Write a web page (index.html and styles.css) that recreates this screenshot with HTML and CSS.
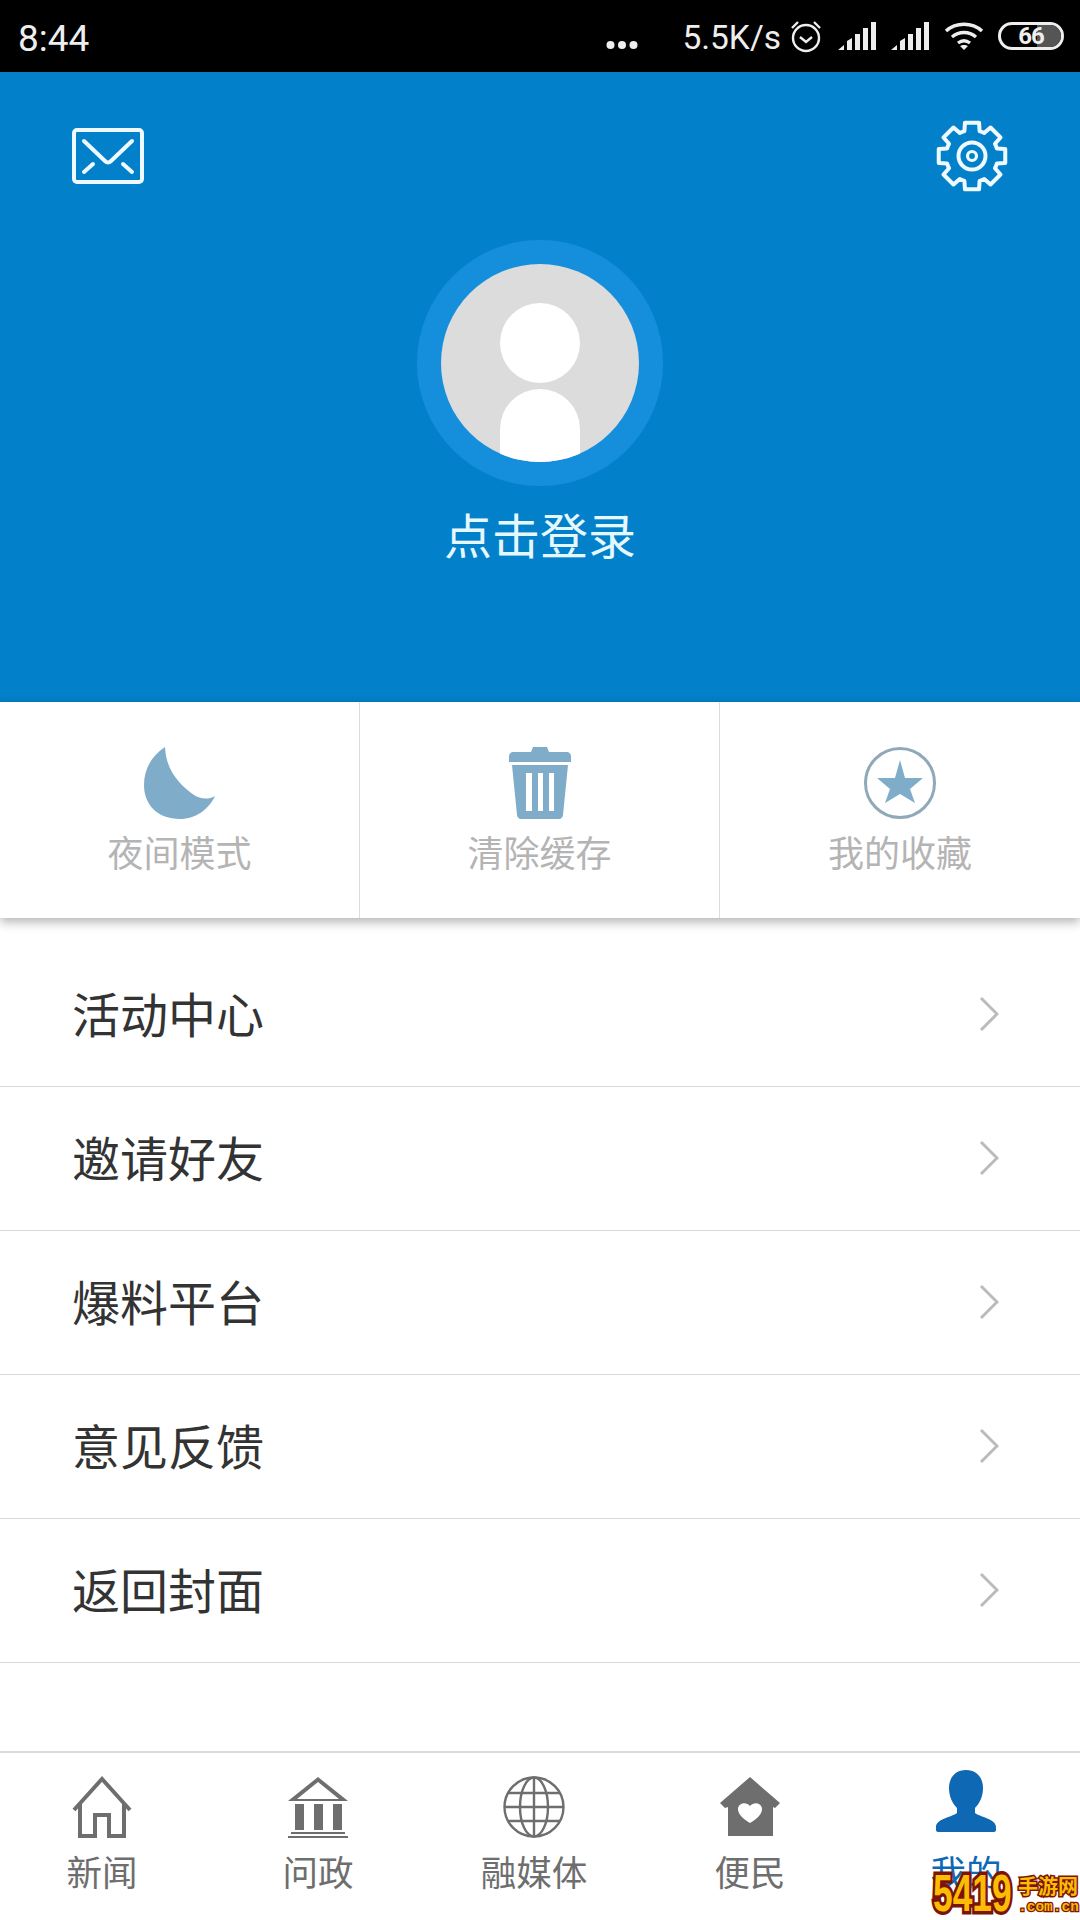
FILE: index.html
```html
<!DOCTYPE html>
<html lang="zh-CN">
<head>
    <meta charset="UTF-8" />
    <meta name="viewport" content="width=device-width, initial-scale=1" />
    <title>我的</title>
    <link rel="stylesheet" href="styles.css">
</head>
<body>

<div class="statusbar">
    <span class="clock">8:44</span>
    <div class="status-right">
        <svg class="dots" width="32" height="10" viewBox="0 0 32 10"><circle cx="4.500" cy="5" r="4"/><circle cx="16" cy="5" r="4"/><circle cx="27.500" cy="5" r="4"/></svg>
        <span class="speed">5.5K/s</span>
        <svg class="alarm" width="32" height="34" viewBox="0 0 32 34" fill="none" stroke="#eee" stroke-width="2.400"><circle cx="16" cy="19" r="13"/><path d="M10 18l6 5 6-5M2 9l6-6M30 9l-6-6"/></svg>
        <svg class="signal" width="38" height="28" viewBox="0 0 38 28" fill="#eee"><path d="M0 28l6-5v5zM9 19l5-3v12H9zM17 12h5v16h-5zM25 6h5v22h-5zM33 0h5v28h-5z"/></svg>
        <svg class="signal" width="38" height="28" viewBox="0 0 38 28" fill="#eee"><path d="M0 28l6-5v5zM9 19l5-3v12H9zM17 12h5v16h-5zM25 6h5v22h-5zM33 0h5v28h-5z"/></svg>
        <svg class="wifi" width="40" height="28" viewBox="0 0 40 28" fill="none" stroke="#eee" stroke-width="3.400"><path d="M2 9c10-9 26-9 36 0M8 15c7-6 17-6 24 0M14 21c4-3 8-3 12 0"/><path d="M20 28l-4-4c2-1.500 6-1.500 8 0z" fill="#eee" stroke="none"/></svg>
        <div class="battery"><div class="battery-fill"></div><span>66</span></div>
    </div>
</div>

<header class="profile">
    <div class="profile-top">
        <svg width="72" height="56" viewBox="0 0 72 56" fill="none" stroke="#eefaff" stroke-width="4" stroke-linecap="round" stroke-linejoin="round"><rect x="2" y="2" width="68" height="52" rx="3"/><path d="M12 13l21 20c2 2 4 2 6 0l21-20M12 44l9-8M60 44l-9-8"/></svg>
        <svg width="72" height="72" viewBox="0 0 72 72" fill="none" stroke="#eefaff" stroke-width="4" stroke-linejoin="round"><path d="M28.400 11.140L28.930 2.740H43.070L43.600 11.140A26 26 0 0 1 48.210 13.040L54.520 7.480L64.520 17.480L58.960 23.790A26 26 0 0 1 60.860 28.400L69.260 28.930V43.070L60.860 43.600A26 26 0 0 1 58.960 48.210L64.520 54.520L54.520 64.520L48.210 58.960A26 26 0 0 1 43.600 60.860L43.070 69.260H28.930L28.400 60.860A26 26 0 0 1 23.790 58.960L17.480 64.520L7.480 54.520L13.040 48.210A26 26 0 0 1 11.140 43.600L2.740 43.070V28.930L11.140 28.400A26 26 0 0 1 13.040 23.790L7.480 17.480L17.480 7.480L23.790 13.040A26 26 0 0 1 28.400 11.140Z"/><circle cx="36" cy="36" r="13.500"/><circle cx="36" cy="36" r="4.500" stroke-width="3.200"/></svg>
    </div>
    <div class="avatar-ring">
        <div class="avatar">
            <div class="avatar-head"></div>
            <div class="avatar-body"></div>
        </div>
    </div>
    <div class="login">点击登录</div>
</header>

<div class="shortcuts">
    <div class="shortcut">
        <svg width="72" height="72" viewBox="0 0 72 72" fill="#7fadc9"><path d="M21 0C6 10 0 24 0 38C0 58 14 72 36 72C52 72 65 62 71 49C64 53 56 52 50 48C36 38 22 24 21 0Z"/></svg>
        <span>夜间模式</span>
    </div>
    <div class="shortcut">
        <svg width="62" height="72" viewBox="0 0 62 72" fill="#7fadc9"><path d="M24 0h14l2 5h18c2 0 4 2 4 4v6H0V9c0-2 2-4 4-4h18z"/><path fill-rule="evenodd" d="M3 18h56l-5 50c0 2-2 4-4 4H12c-2 0-4-2-4-4zM17 26v38h6V26zM29 26v38h5V26zM40 26v38h5V26z"/></svg>
        <span>清除缓存</span>
    </div>
    <div class="shortcut">
        <svg width="72" height="72" viewBox="0 0 72 72"><circle cx="36" cy="36" r="34.500" fill="none" stroke="#8fa9b8" stroke-width="3"/><path fill="#7fadc9" d="M36 13l5 18h18L46 42l5 14-15-9-15 9 5-14-13-11h18z"/></svg>
        <span>我的收藏</span>
    </div>
</div>

<ul class="menu">
    <li><span>活动中心</span><svg width="20" height="36" viewBox="0 0 20 36" fill="none" stroke="#bbb" stroke-width="3"><path d="M2 2l16 16L2 34"/></svg></li>
    <li><span>邀请好友</span><svg width="20" height="36" viewBox="0 0 20 36" fill="none" stroke="#bbb" stroke-width="3"><path d="M2 2l16 16L2 34"/></svg></li>
    <li><span>爆料平台</span><svg width="20" height="36" viewBox="0 0 20 36" fill="none" stroke="#bbb" stroke-width="3"><path d="M2 2l16 16L2 34"/></svg></li>
    <li><span>意见反馈</span><svg width="20" height="36" viewBox="0 0 20 36" fill="none" stroke="#bbb" stroke-width="3"><path d="M2 2l16 16L2 34"/></svg></li>
    <li><span>返回封面</span><svg width="20" height="36" viewBox="0 0 20 36" fill="none" stroke="#bbb" stroke-width="3"><path d="M2 2l16 16L2 34"/></svg></li>
</ul>

<nav class="tabbar">
    <div class="tab">
        <svg width="60" height="62" viewBox="0 0 60 62" fill="none" stroke="#6e6e6e" stroke-width="4"><path d="M2 34L30 3l28 31M8 27v33h15V39h14v21h15V27"/></svg>
        <span>新闻</span>
    </div>
    <div class="tab">
        <svg width="60" height="62" viewBox="0 0 60 62" fill="#6e6e6e"><path d="M30 1l30 24H0zM30 6L9 23h42z" fill-rule="evenodd"/><path d="M7 28h9v26H7zM26 28h9v26h-9zM45 28h9v26h-9zM3 56h54v2H3zM0 60h60v2H0z"/></svg>
        <span>问政</span>
    </div>
    <div class="tab">
        <svg width="62" height="62" viewBox="0 0 62 62" fill="none" stroke="#6e6e6e" stroke-width="2.400"><circle cx="31" cy="31" r="29.500"/><ellipse cx="31" cy="31" rx="14" ry="29.500"/><path d="M31 1v60M5 17h52M2 31h58M5 45h52"/></svg>
        <span>融媒体</span>
    </div>
    <div class="tab">
        <svg width="60" height="62" viewBox="0 0 60 62" fill="#6e6e6e"><path fill-rule="evenodd" d="M30 1l30 26-5 5-2-1v29H8V31l-3 1-5-5zM30 47c8-5 12-9 12-14 0-6-8-8-12-3-4-5-12-3-12 3 0 5 4 9 12 14z"/></svg>
        <span>便民</span>
    </div>
    <div class="tab active">
        <svg width="60" height="62" viewBox="0 0 60 62" fill="#0e68b4"><path d="M30 0c11 0 17 8 17 18 0 8-3 15-8 20v5c5 4 21 6 21 14v3c0 1-1 2-2 2H2c-1 0-2-1-2-2v-3c0-8 16-10 21-14v-5c-5-5-8-12-8-20C13 8 19 0 30 0z"/></svg>
        <span>我的</span>
    </div>
</nav>

<div class="watermark">
    <div class="wm-num"><span>5419</span></div>
    <div class="wm-side">
        <span class="wm-cn">手游网</span>
        <span class="wm-com">.com.cn</span>
    </div>
</div>

</body>
</html>
```

FILE: styles.css
```css
* { box-sizing: border-box; }
html, body { margin: 0; padding: 0; }
body {
  position: relative;
  width: 1080px;
  height: 1920px;
  overflow: hidden;
  background: #fff;
  font-family: "Noto Sans CJK SC", "Noto Sans", sans-serif;
  color: #333;
}

.statusbar {
  height: 72px;
  background: #000;
  color: #eee;
  display: flex;
  justify-content: space-between;
  align-items: center;
  padding: 0 16px 0 18px;
  font-family: Roboto, sans-serif;
}
.clock { font-size: 37px; margin-top: 4px; }
.status-right { display: flex; align-items: center; }
.dots { fill: #eee; margin: 18px 44px 0 0; }
.speed { font-size: 33.5px; margin: 2px 9px 0 0; }
.alarm { margin-right: 16px; }
.signal { margin-right: 15px; }
.wifi { margin: 0 14px 0 0; }
.battery {
  position: relative;
  width: 66px;
  height: 28px;
  border: 3px solid #eee;
  border-radius: 14px;
  overflow: hidden;
  display: flex;
  align-items: center;
  justify-content: center;
}
.battery span {
  position: relative;
  font-size: 24px;
  font-weight: 700;
  letter-spacing: -1px;
}
.battery-fill {
  position: absolute;
  top: 0;
  right: 0;
  bottom: 0;
  width: 24px;
  background: #555;
}

.profile {
  height: 630px;
  background: #0380ca;
  display: flex;
  flex-direction: column;
  align-items: center;
}
.profile-top {
  width: 100%;
  display: flex;
  justify-content: space-between;
  align-items: center;
  padding: 48px 72px 0 72px;
}
.avatar-ring {
  width: 246px;
  height: 246px;
  margin-top: 48px;
  border-radius: 50%;
  background: #158fdc;
  display: flex;
  align-items: center;
  justify-content: center;
}
.avatar {
  position: relative;
  width: 198px;
  height: 198px;
  border-radius: 50%;
  background: #dcdcdc;
  overflow: hidden;
}
.avatar-head {
  position: absolute;
  left: 59px;
  top: 39px;
  width: 80px;
  height: 80px;
  border-radius: 50%;
  background: #fff;
}
.avatar-body {
  position: absolute;
  left: 59px;
  top: 125px;
  width: 80px;
  height: 90px;
  border-radius: 40px 40px 0 0;
  background: #fff;
}
.login {
  margin-top: 13px;
  font-size: 48px;
  line-height: 68px;
  color: #e6f8ff;
}

.shortcuts {
  position: relative;
  height: 216px;
  display: grid;
  grid-template-columns: repeat(3, 360px);
  box-shadow: 0 4px 10px rgba(0,0,0,0.3);
}
.shortcut {
  display: flex;
  flex-direction: column;
  align-items: center;
  padding-top: 45px;
  border-right: 1px solid #dcdcdc;
  font-size: 36px;
  color: #b4b4b4;
}
.shortcut:last-child { border-right: none; }
.shortcut span { margin-top: 6px; line-height: 52px; }

.menu {
  list-style: none;
  margin: 25px 0 0;
  padding: 0;
}
.menu li {
  height: 144px;
  display: flex;
  align-items: center;
  justify-content: space-between;
  padding: 0 81px 0 72px;
  border-bottom: 1px solid #d8d8d8;
  font-size: 48px;
  color: #333;
}
.menu li span { margin-bottom: 6px; }
.menu li svg { margin-bottom: 2px; }

.tabbar {
  position: absolute;
  left: 0;
  right: 0;
  bottom: 0;
  height: 169px;
  display: grid;
  grid-template-columns: repeat(5, 216px);
  border-top: 2px solid #dcdcdc;
  background: #fff;
}
.tab {
  display: flex;
  flex-direction: column;
  align-items: center;
  padding: 23px 12px 0 0;
  font-size: 35.5px;
  color: #6e6e6e;
}
.tab span { margin-top: 8px; line-height: 50px; }
.tab.active { color: #0e68b4; }
.tab.active svg { margin-top: -6px; margin-bottom: 6px; }

/* image-host stamp in the corner, lies over the tab bar */
.watermark {
  position: absolute;
  left: 933px;
  bottom: 0;
  width: 147px;
  height: 54px;
  display: flex;
  font-weight: 700;
  color: #fcbc05;
}
.wm-num {
  width: 85px;
  font-family: "Liberation Sans", sans-serif;
  font-size: 52px;
  line-height: 54px;
  white-space: nowrap;
}
.wm-num span {
  display: inline-block;
  transform: scaleX(0.68);
  transform-origin: left center;
  -webkit-text-stroke: 7px #7a1505;
  paint-order: stroke fill;
}
.wm-side {
  display: flex;
  flex-direction: column;
  align-items: flex-start;
  padding-top: 5px;
  white-space: nowrap;
}
.wm-cn {
  font-family: "Noto Sans CJK SC", sans-serif;
  font-size: 20px;
  line-height: 29px;
  -webkit-text-stroke: 3px #7a1505;
  paint-order: stroke fill;
}
.wm-com {
  font-family: "Liberation Mono", monospace;
  font-size: 14.5px;
  line-height: 15px;
  -webkit-text-stroke: 2.5px #7a1505;
  paint-order: stroke fill;
}
```
